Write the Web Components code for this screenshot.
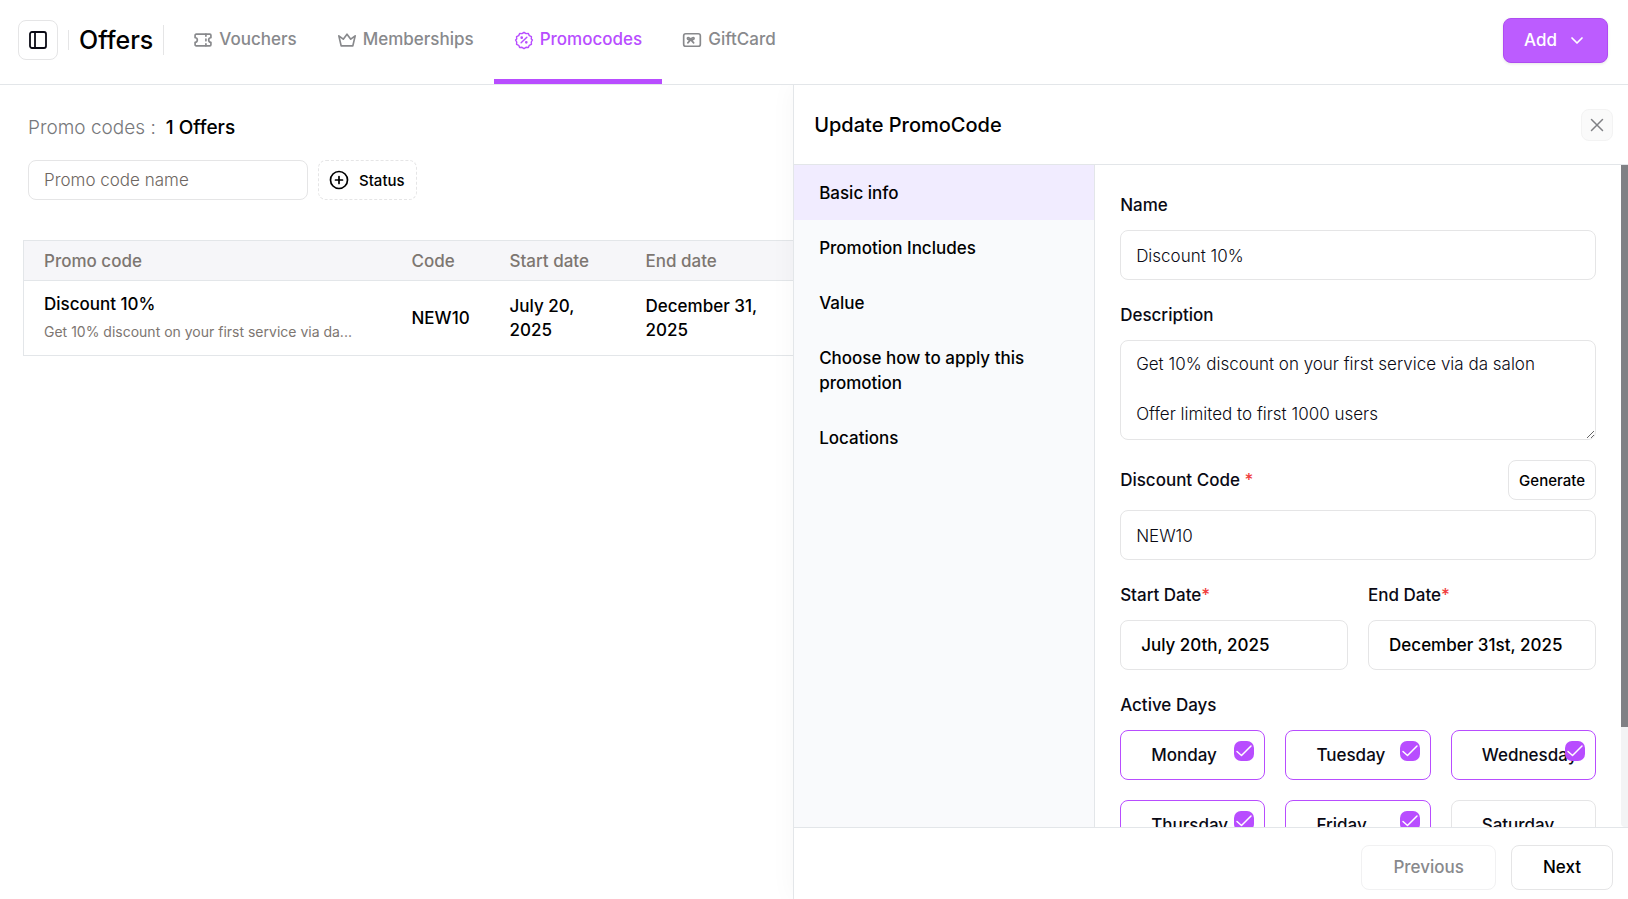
<!DOCTYPE html>
<html lang="en">
<head>
<meta charset="utf-8">
<meta name="viewport" content="width=device-width, initial-scale=1">
<title>Offers</title>
<style>
  html, body { height: 100%; margin: 0; }
  body { font-family: Inter, "Noto Sans", sans-serif; font-size: 17px; line-height: 25px; color: #0a0a14; background: #fff; --accent: #b84dff; --line: #e3e6e9; --muted: #88898c; --box: #e5e5e6; }
</style>
</head>
<body>
<offers-app></offers-app>
<script>
const base = `
  *, *::before, *::after { box-sizing: border-box; }
  button, input, textarea { font: inherit; color: inherit; margin: 0; }
  button { background: #fff; cursor: pointer; padding: 0; }
  svg { display: block; fill: none; stroke: currentColor; stroke-linecap: round; stroke-linejoin: round; }
`;
function define(name, html, setup) {
  const template = document.createElement('template');
  customElements.define(name, class extends HTMLElement {
    connectedCallback() {
      if (this.shadowRoot) return;
      template.innerHTML = `<style>${base}</style>${typeof html === 'function' ? html(this) : html}`;
      this.attachShadow({ mode: 'open' }).append(template.content.cloneNode(true));
      if (setup) setup(this, this.shadowRoot);
    }
  });
}

define('nav-tab', el => `
  <style>
    :host { display: flex; }
    a { display: flex; align-items: center; gap: 6px; padding: 0 20px; color: var(--muted); text-decoration: none; font-weight: 500; border-bottom: 5px solid transparent; }
    a[aria-current] { color: var(--accent); border-bottom-color: var(--accent); }
    ::slotted(svg) { width: 20px; height: 20px; fill: none; stroke: currentColor; stroke-width: 2; stroke-linecap: round; stroke-linejoin: round; }
  </style>
  <a href="#" ${el.hasAttribute('active') ? 'aria-current="page"' : ''}><slot name="icon"></slot><span><slot></slot></span></a>
`);

define('app-header', `
  <style>
    :host { display: block; }
    header { display: flex; height: 85px; border-bottom: 1px solid var(--line); padding: 0 20px 4px 18px; align-items: center; }
    .toggle { width: 40px; height: 40px; border: 1px solid var(--box); border-radius: 8px; display: grid; place-items: center; }
    .rule { width: 1px; height: 20px; background: var(--box); margin: 0 10px; }
    h1 { margin: 0; font-size: 25px; line-height: 30px; font-weight: 500; color: #000; border-right: 1px solid var(--box); padding-right: 10px; }
    nav { display: flex; align-self: flex-start; height: 84px; margin-left: 9px; flex: 1; }
    .add { display: flex; align-items: center; gap: 10px; height: 45px; padding: 0 20px; color: #fff; background: #bc5cff; border: 1px solid #ae4cf2; border-radius: 8px; font-weight: 500; box-shadow: 0 1px 3px rgba(0,0,0,.1); }
  </style>
  <header>
    <button class="toggle" aria-label="Toggle sidebar"><svg width="20" height="20" viewBox="0 0 20 20" stroke-width="1.8"><rect x="2" y="2" width="16" height="16" rx="2"/><path d="M7 2v16"/></svg></button>
    <span class="rule"></span>
    <h1>Offers</h1>
    <nav aria-label="Offers">
      <nav-tab><svg slot="icon" viewBox="0 0 24 24"><path d="M2.500 9.300a2.700 2.700 0 0 1 0 5.400v3a1.300 1.300 0 0 0 1.300 1.300h16.400a1.300 1.300 0 0 0 1.300-1.300v-3a2.700 2.700 0 0 1 0-5.400v-3a1.300 1.300 0 0 0-1.300-1.300H3.800a1.300 1.300 0 0 0-1.300 1.300Z"/><path d="M15.500 5v2.500M15.500 11v2M15.500 16.500V19"/></svg>Vouchers</nav-tab>
      <nav-tab><svg slot="icon" viewBox="0 0 24 24"><path d="M5 19h14L21.800 7l-5.300 4L12 5l-4.500 6-5.300-4Z"/></svg>Memberships</nav-tab>
      <nav-tab active><svg slot="icon" viewBox="-2 -2 28 28"><path d="M12 1.200l2.800 1.900 3.300-.2 1.300 3 3 1.300-.2 3.300 1.600 1.500-1.600 2.800.2 3.300-3 1.300-1.300 3-3.300-.2-2.800 1.900-2.800-1.900-3.300.2-1.300-3-3-1.300.2-3.300-1.600-2.800 1.600-1.500-.2-3.300 3-1.300 1.300-3 3.300.2Z"/><path d="M16 8l-8 8"/><circle cx="8.800" cy="8.800" r=".9"/><circle cx="15.200" cy="15.200" r=".9"/></svg>Promocodes</nav-tab>
      <nav-tab><svg slot="icon" viewBox="0 0 24 24"><rect x="2" y="4.500" width="20" height="15" rx="2.500"/><path d="M10.500 11.500c-1-2.500-4-3-4-1.200 0 1.600 2.500 1.500 4 1.200ZM10.500 11.500c1-2.500 4-3 4-1.200 0 1.600-2.500 1.500-4 1.200ZM10.500 11.500l-3.500 4M10.500 11.500l3.500 4"/></svg>GiftCard</nav-tab>
    </nav>
    <button class="add">Add<svg width="20" height="20" viewBox="0 0 20 20" stroke-width="1.700"><path d="M5 8l5 5 5-5"/></svg></button>
  </header>
`);

define('promo-table', `
  <style>
    :host { display: block; }
    table { width: 1035px; table-layout: fixed; border-collapse: collapse; border: 1px solid var(--line); text-align: left; font-weight: 500; }
    .c1 { width: 368px; } .c2 { width: 98px; } .c3 { width: 136px; } .c4 { width: 158px; }
    th { height: 40px; padding: 1px 20px 0; font-weight: 500; color: #7d7671; background: #f6f6f9; }
    tr { border-bottom: 1px solid var(--line); }
    td { height: 75px; padding: 0 20px; line-height: 24px; color: #000; }
    .name { line-height: 28px; }
    .note { font-size: 14px; font-weight: 400; color: #7d7671; white-space: nowrap; overflow: hidden; text-overflow: ellipsis; line-height: 28px; }
  </style>
  <table>
    <colgroup><col class="c1"><col class="c2"><col class="c3"><col class="c4"><col></colgroup>
    <thead><tr><th>Promo code</th><th>Code</th><th>Start date</th><th>End date</th><th></th></tr></thead>
    <tbody><tr>
      <td><div class="name">Discount 10%</div><div class="note">Get 10% discount on your first service via da...</div></td>
      <td>NEW10</td><td>July 20, 2025</td><td>December 31, 2025</td><td></td>
    </tr></tbody>
  </table>
`);

define('promo-list', `
  <style>
    :host { display: block; min-width: 0; overflow: hidden; padding: 28px 0 0 23px; }
    .tools { padding: 0 5px; }
    h2 { margin: 0; font-size: 19px; line-height: 30px; font-weight: 300; color: #77787b; display: flex; gap: 10px; }
    h2 b { font-weight: 500; color: #000; }
    .filters { display: flex; gap: 10px; margin: 17px 0 40px; }
    input { width: 280px; height: 40px; padding: 0 15px; border: 1px solid var(--box); border-radius: 8px; background: #fff; font-weight: 300; }
    input::placeholder { color: #6d6661; opacity: 1; }
    button { display: flex; align-items: center; gap: 10px; height: 40px; padding: 0 11px 0 10px; border: 1px dashed var(--box); border-radius: 8px; font-size: 15px; font-weight: 500; color: #000; }
  </style>
  <div class="tools">
    <h2><span>Promo codes :</span><b>1 Offers</b></h2>
    <div class="filters">
      <input type="text" placeholder="Promo code name" aria-label="Promo code name">
      <button><svg width="20" height="20" viewBox="0 0 20 20" stroke-width="1.700"><circle cx="10" cy="10" r="8.500"/><path d="M10 6.500v7M6.500 10h7"/></svg>Status</button>
    </div>
  </div>
  <promo-table></promo-table>
`);

define('section-nav', `
  <style>
    :host { display: block; background: #f9fafc; border-right: 1px solid var(--line); }
    a { display: block; padding: 16px 25px 14px; color: #000; font-weight: 500; text-decoration: none; }
    a[aria-current] { background: #f1ecff; }
  </style>
  <nav aria-label="Promotion sections">
    <a href="#" aria-current="step">Basic info</a>
    <a href="#">Promotion Includes</a>
    <a href="#">Value</a>
    <a href="#">Choose how to apply this promotion</a>
    <a href="#">Locations</a>
  </nav>
`);

define('form-field', el => {
  const kind = el.getAttribute('kind') || 'text', value = el.getAttribute('value') || '';
  const control = kind === 'area' ? `<textarea id="c">${value}</textarea>`
    : kind === 'date' ? `<button id="c" type="button">${value}</button>`
    : `<input id="c" type="text" value="${value}">`;
  return `
  <style>
    :host { display: block; min-width: 0; }
    .head { display: flex; justify-content: space-between; align-items: center; margin-bottom: 9px; }
    .head.tall { margin-bottom: 10px; }
    label { font-weight: 500; line-height: 31px; }
    i { font-style: normal; color: #f03e3e; }
    input, textarea, button { display: block; width: 100%; height: 50px; border: 1px solid var(--box); border-radius: 8px; background: #fff; padding: 1px 15px 0; font-weight: 300; color: #0a0a14; }
    textarea { height: 100px; padding: 11px 15px; resize: vertical; }
    button { padding: 1px 20px 0; text-align: left; font-weight: 500; color: #000; }
  </style>
  <div class="head${el.childElementCount ? ' tall' : ''}"><label for="c">${el.getAttribute('label')}${el.hasAttribute('required') ? '<i>*</i>' : ''}</label><slot></slot></div>${control}`;
});

define('day-toggle', el => `
  <style>
    :host { display: block; min-width: 0; }
    label { display: flex; align-items: center; position: relative; height: 50px; padding: 0 30px; border: 1px solid var(--box); border-radius: 8px; font-weight: 500; }
    label:has(:checked) { border-color: var(--accent); }
    input { position: absolute; top: 10px; right: 10px; width: 20px; height: 20px; appearance: none; border-radius: 7px; }
    input:checked { background: var(--accent); }
    svg { position: absolute; top: 10px; right: 10px; color: #fff; pointer-events: none; visibility: hidden; }
    input:checked + svg { visibility: visible; }
  </style>
  <label><slot></slot><input type="checkbox" ${el.hasAttribute('checked') ? 'checked' : ''}><svg width="20" height="20" viewBox="0 0 20 20" stroke-width="1.500"><path d="M3 10.500l4.500 4L17 5"/></svg></label>
`);

define('scroll-area', `
  <style>
    :host { display: grid; grid-template-columns: minmax(0, 1fr) 7px; min-height: 0; min-width: 0; overflow: hidden; }
    .view { overflow-y: auto; scrollbar-width: none; min-height: 0; }
    .track { background: #f3f4f5; border-radius: 0 0 0 4px; min-height: 0; }
    .thumb { background: #808185; }
  </style>
  <div class="view" tabindex="0"><slot></slot></div>
  <div class="track"><div class="thumb"></div></div>
`, (el, root) => {
  const view = root.querySelector('.view'), thumb = root.querySelector('.thumb');
  const sync = () => {
    const ratio = view.clientHeight / view.scrollHeight;
    thumb.style.height = Math.round(view.clientHeight * ratio) + 'px';
    thumb.style.marginTop = Math.round(view.scrollTop * ratio) + 'px';
  };
  view.addEventListener('scroll', sync);
  new ResizeObserver(sync).observe(view);
});

define('promo-form', `
  <style>
    :host { display: block; padding: 25px; }
    form { display: grid; gap: 20px; }
    .dates { display: grid; grid-template-columns: 1fr 1fr; gap: 20px; }
    fieldset { border: 0; margin: 0; padding: 0; min-width: 0; }
    legend { padding: 0; margin-bottom: 9px; line-height: 31px; font-weight: 500; }
    .days { display: grid; grid-template-columns: repeat(3, minmax(0, 1fr)); gap: 20px; }
    .gen { height: 40px; padding: 0 10px; border: 1px solid var(--box); border-radius: 8px; font-size: 15px; font-weight: 500; color: #000; }
  </style>
  <form>
    <form-field label="Name" value="Discount 10%"></form-field>
    <form-field label="Description" kind="area" value="Get 10% discount on your first service via da salon&#10;&#10;Offer limited to first 1000 users"></form-field>
    <form-field label="Discount Code " required value="NEW10"><button type="button" class="gen">Generate</button></form-field>
    <div class="dates">
      <form-field label="Start Date" required kind="date" value="July 20th, 2025"></form-field>
      <form-field label="End Date" required kind="date" value="December 31st, 2025"></form-field>
    </div>
    <fieldset>
      <legend>Active Days</legend>
      <div class="days">
        <day-toggle checked>Monday</day-toggle><day-toggle checked>Tuesday</day-toggle><day-toggle checked>Wednesday</day-toggle>
        <day-toggle checked>Thursday</day-toggle><day-toggle checked>Friday</day-toggle><day-toggle>Saturday</day-toggle>
        <day-toggle>Sunday</day-toggle>
      </div>
    </fieldset>
  </form>
`);

define('promo-drawer', `
  <style>
    :host { display: grid; grid-template-rows: 80px minmax(0, 1fr) auto; min-height: 0; min-width: 0; position: relative; background: #fff; border-left: 1px solid var(--line); box-shadow: 0 0 25px rgba(0,0,0,.04); clip-path: inset(0 0 0 -40px); }
    header { display: flex; align-items: center; justify-content: space-between; padding: 0 15px 0 20px; border-bottom: 1px solid var(--line); }
    h2 { margin: 0; font-size: 20px; line-height: 30px; font-weight: 500; color: #000; }
    .close { width: 32px; height: 32px; border: 1px solid #f3f3f3; background: #fafafa; border-radius: 8px; display: grid; place-items: center; color: #808185; }
    .body { display: grid; grid-template-columns: 301px minmax(0, 1fr); min-height: 0; }
    footer { display: flex; justify-content: flex-end; gap: 15px; padding: 17px 15px 9px; border-top: 1px solid var(--line); }
    footer button { height: 45px; padding: 0 31px; border: 1px solid var(--box); border-radius: 8px; font-weight: 500; color: #000; }
    footer button:disabled { color: var(--muted); border-color: #f1f1f2; }
  </style>
  <header><h2>Update PromoCode</h2><button class="close" aria-label="Close"><svg width="20" height="20" viewBox="0 0 20 20" stroke-width="1.500"><path d="M4.500 4.500l11 11M15.500 4.500l-11 11"/></svg></button></header>
  <div class="body">
    <section-nav></section-nav>
    <scroll-area><promo-form></promo-form></scroll-area>
  </div>
  <footer><button disabled>Previous</button><button>Next</button></footer>
`);

define('offers-app', `
  <style>
    :host { display: grid; grid-template-rows: auto minmax(0, 1fr); height: 100vh; overflow: hidden; }
    main { display: grid; grid-template-columns: minmax(0, 19fr) minmax(0, 20fr); min-height: 0; }
  </style>
  <app-header></app-header>
  <main><promo-list></promo-list><promo-drawer></promo-drawer></main>
`);
</script>
</body>
</html>
